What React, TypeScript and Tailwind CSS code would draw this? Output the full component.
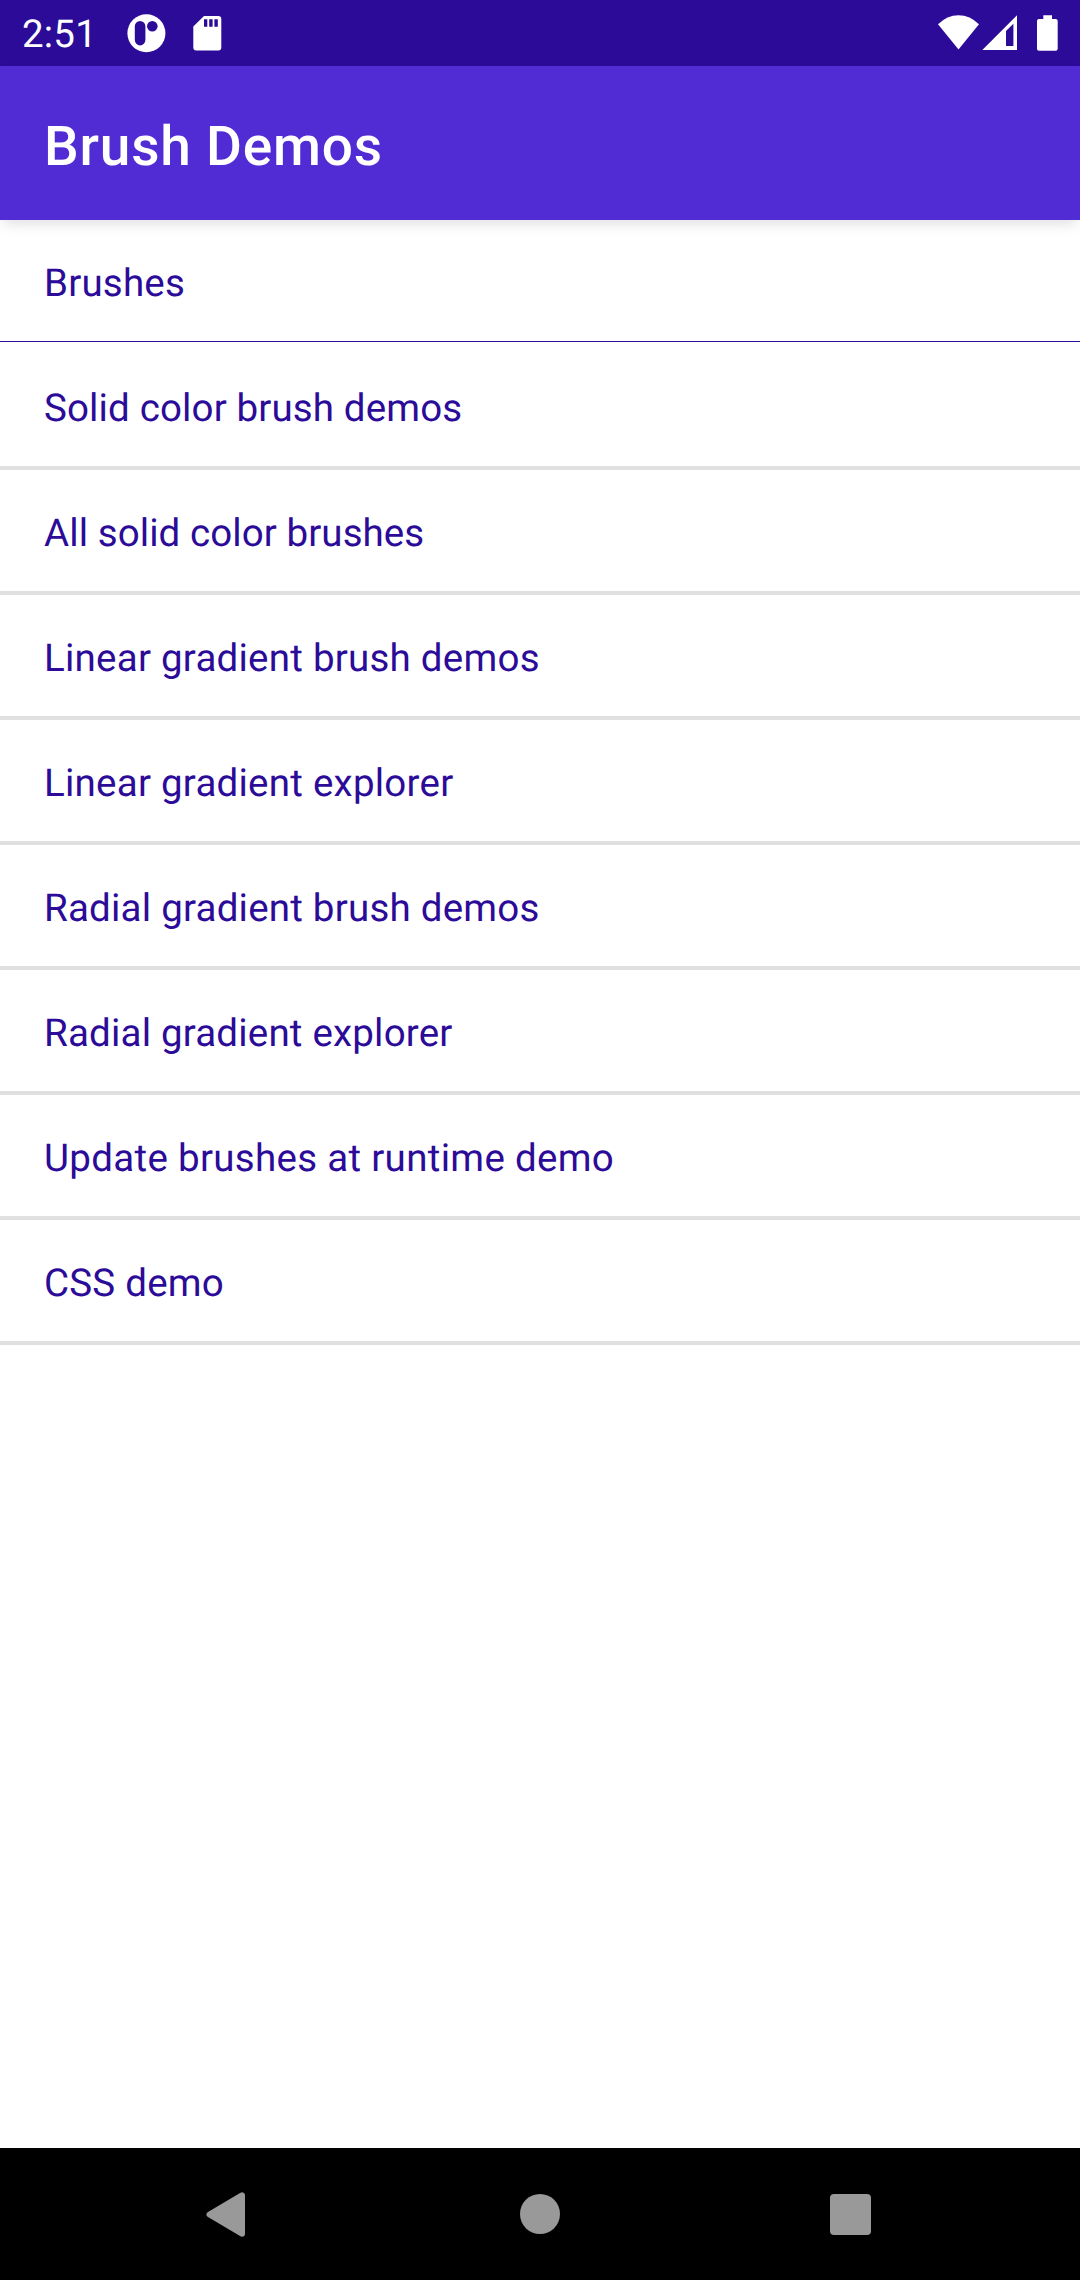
const rows = [
  { label: 'Solid color brush demos', tracking: 'tracking-[0.14px]' },
  { label: 'All solid color brushes', tracking: 'tracking-[0.08px]' },
  { label: 'Linear gradient brush demos', tracking: 'tracking-[0.24px]' },
  { label: 'Linear gradient explorer', tracking: 'tracking-[0.24px]' },
  { label: 'Radial gradient brush demos', tracking: 'tracking-[0.22px]' },
  { label: 'Radial gradient explorer', tracking: 'tracking-[0.19px]' },
  { label: 'Update brushes at runtime demo', tracking: 'tracking-[0.31px]' },
  { label: 'CSS demo', tracking: 'tracking-[0.22px]' },
];

function StatusBar() {
  return (
    <header className="flex h-[66px] shrink-0 items-center justify-between bg-[#2b0b98] pl-[22px] pr-[22px] text-white">
      <div className="flex items-center">
        <span className="w-[105px] pt-[4px] text-[38.5px] leading-[62px] tracking-[0.2px]">2:51</span>
        <svg className="h-[66px] w-[40px]" viewBox="127 0 40 66">
          <circle cx="146.400" cy="33.200" r="19" fill="white" />
          <rect x="134.800" y="21" width="10.600" height="24.400" rx="5.300" fill="#2b0b98" />
          <circle cx="152.300" cy="26.300" r="5.300" fill="#2b0b98" />
        </svg>
        <svg className="ml-[26px] h-[66px] w-[29px]" viewBox="193 0 29 66">
          <path d="M204 16h14.300a3 3 0 0 1 3 3v28.500a3 3 0 0 1-3 3h-22a3 3 0 0 1-3-3V26.500z" fill="white" />
          <path d="M204 19.300h3.300v7.400H204zM209.200 19.300h3.400v7.400h-3.400zM214.400 19.300h3.400v7.400h-3.400z" fill="#2b0b98" />
        </svg>
      </div>
      <svg className="h-[66px] w-[120px]" viewBox="938 0 120 66" fill="white">
        <path d="M938 24.300Q947 15.200 958.500 15.200T979 24.300L958.500 49.600z" />
        <path fillRule="evenodd" d="M982.300 50L1017 15.200V50zM1006 31v15h7.400V23.800z" />
        <path d="M1043.300 15.300h8.700V19h3.700a2 2 0 0 1 2 2v27.700a2 2 0 0 1-2 2h-16.700a2 2 0 0 1-2-2V21a2 2 0 0 1 2-2h4.300z" />
      </svg>
    </header>
  );
}

function NavigationBar() {
  return (
    <nav className="flex h-[132px] shrink-0 items-center bg-black pl-[206px]">
      <svg className="h-[132px] w-[40px]" viewBox="206 2148 40 132">
        <path d="M209.500 2214.500L242 2195.300V2233.700z" fill="#999" stroke="#999" strokeWidth="6" strokeLinejoin="round" />
      </svg>
      <div className="ml-[274px] h-10 w-10 rounded-full bg-[#999]" />
      <div className="ml-[270px] h-[41px] w-[41px] rounded-[4px] bg-[#999]" />
    </nav>
  );
}

export default function App() {
  return (
    <div className="flex h-[2280px] w-[1080px] flex-col overflow-hidden bg-white font-['Roboto',sans-serif] [text-rendering:geometricPrecision]">
      <StatusBar />
      <div className="z-10 flex h-[154px] shrink-0 items-center bg-[#512bd4] pl-[44px] pt-[8px] text-[55px] font-medium tracking-[0.8px] text-white shadow-[0_6px_14px_-3px_rgba(0,0,0,0.14)]">
        Brush Demos
      </div>
      <main className="flex grow flex-col text-[38.5px] leading-[45px] text-[#2b0b98]">
        <div className="flex h-[122px] flex-col border-b border-[#2b0b98] pl-[44px] pt-[41px] tracking-[0.2px]">Brushes</div>
        <div className="h-[3px]" />
        {rows.map(({ label, tracking }) => (
          <div key={label} className="flex h-[125px] flex-col border-b-4 border-[#e0e0e0] pl-[44px] pt-[41px]">
            <span className={tracking}>{label}</span>
          </div>
        ))}
      </main>
      <NavigationBar />
    </div>
  );
}
